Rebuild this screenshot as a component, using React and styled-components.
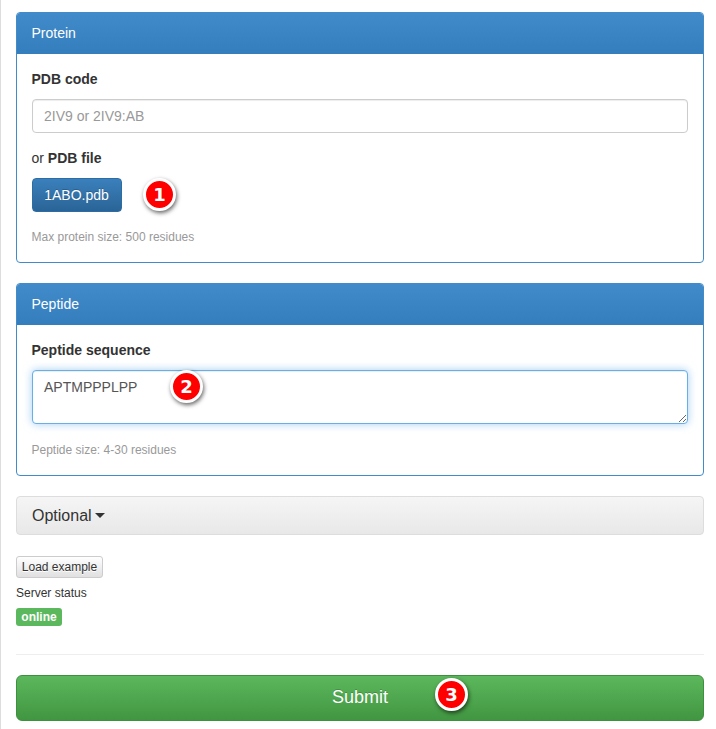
import styled, { createGlobalStyle } from "styled-components";

const GlobalStyle = createGlobalStyle`
  html, body {
    margin: 0;
    padding: 0;
    background: #fff;
  }
  * {
    box-sizing: border-box;
  }
`;

// Full page with the thin grey strip on the left edge
const Page = styled.div`
  position: relative;
  width: 716px;
  height: 729px;
  overflow: hidden;
  padding: 12px 12px 0 15px;
  border-left: 1px solid #ddd;
  font-family: "Liberation Sans", Arial, sans-serif;
  font-size: 14px;
  line-height: 20px;
  color: #333;
`;

const Panel = styled.section`
  border: 1px solid #428bca;
  border-radius: 4px;
  margin-bottom: 20px;
  background: #fff;
`;

const PanelHeading = styled.div`
  height: 41px;
  padding: 10px 14.5px;
  color: #fff;
  background: linear-gradient(to bottom, #428bca 0%, #357ebd 100%);
  border-bottom: 1px solid #357ebd;
  border-radius: 3px 3px 0 0;
`;

const PanelBody = styled.div`
  padding: 15px 15px 15px 14.5px;
`;

const Label = styled.div`
  margin-bottom: ${(p) => p.$gap}px;
`;

const TextInput = styled.input`
  display: block;
  width: 100%;
  height: 34px;
  padding: 6px 12px 6px 11.5px;
  margin-bottom: 15px;
  font: inherit;
  color: #555;
  border: 1px solid #ccc;
  border-radius: 4px;
  box-shadow: inset 0 1px 1px rgba(0, 0, 0, 0.075);
  outline: none;
  &::placeholder {
    color: #999;
    opacity: 1;
  }
`;

const TextArea = styled.textarea`
  display: block;
  width: 100%;
  height: 54px;
  padding: 6px 12px 6px 11.5px;
  margin: 0 0 16px;
  font: inherit;
  color: #555;
  border: 1px solid #66afe9;
  border-radius: 4px;
  box-shadow: inset 0 1px 1px rgba(0, 0, 0, 0.075), 0 0 8px rgba(102, 175, 233, 0.6);
  outline: none;
  resize: vertical;
`;

const FileButton = styled.button`
  display: block;
  width: 90px;
  height: 34px;
  padding: 6px 0;
  font: inherit;
  color: #fff;
  background: linear-gradient(to bottom, #3a80bc 0%, #2a6496 100%);
  border: 1px solid #2e6da4;
  border-radius: 4px;
  text-shadow: 0 -1px 0 rgba(0, 0, 0, 0.2);
  margin-bottom: 15px;
`;

const Help = styled.div`
  font-size: 12px;
  color: #999;
`;

const OptionalBar = styled.div`
  display: flex;
  align-items: center;
  gap: 3px;
  height: 39px;
  padding: 0 15px;
  margin-bottom: 21px;
  font-size: 16px;
  background: linear-gradient(to bottom, #f5f5f5 0%, #e8e8e8 100%);
  border: 1px solid #ddd;
  border-radius: 4px;
`;

const Caret = styled.span`
  width: 0;
  height: 0;
  border-top: 5px solid #333;
  border-left: 5px solid transparent;
  border-right: 5px solid transparent;
`;

const ExampleButton = styled.button`
  display: block;
  width: 87px;
  height: 22px;
  padding: 0;
  font: inherit;
  font-size: 12px;
  line-height: 18px;
  white-space: nowrap;
  color: #333;
  background: linear-gradient(to bottom, #fff 0%, #e0e0e0 100%);
  border: 1px solid #ccc;
  border-radius: 3px;
  text-shadow: 0 1px 0 #fff;
  margin-bottom: 5px;
`;

const StatusLine = styled.div`
  font-size: 12px;
  margin-bottom: 5px;
`;

const StatusBadge = styled.span`
  display: block;
  width: 46px;
  height: 18px;
  font-size: 12px;
  font-weight: bold;
  line-height: 18px;
  text-align: center;
  color: #fff;
  background: #5cb85c;
  border-radius: 3px;
`;

const Rule = styled.hr`
  margin: 28px 0 20px;
  border: 0;
  border-top: 1px solid #eee;
`;

const SubmitButton = styled.button`
  display: block;
  width: 100%;
  height: 46px;
  padding: 0 0 2px;
  font: inherit;
  font-size: 18px;
  color: #fff;
  background: linear-gradient(to bottom, #5cb85c 0%, #419641 100%);
  border: 1px solid #3e8f3e;
  border-radius: 6px;
  text-shadow: 0 -1px 0 rgba(0, 0, 0, 0.2);
`;

// Numbered callout laid over the form
const Callout = styled.span`
  position: absolute;
  left: ${(p) => p.$x - 17}px;
  top: ${(p) => p.$y - 16}px;
  display: flex;
  align-items: center;
  justify-content: center;
  width: 33px;
  height: 33px;
  font-family: "DejaVu Sans", sans-serif;
  font-size: 18px;
  font-weight: bold;
  color: #fff;
  background: #f00;
  border: 3px solid #fff;
  border-radius: 50%;
  box-shadow: 1px 2px 4px rgba(0, 0, 0, 0.6);
`;

export default function App() {
  return (
    <Page>
      <GlobalStyle />
      <Panel>
        <PanelHeading>Protein</PanelHeading>
        <PanelBody>
          <Label $gap={10}><b>PDB code</b></Label>
          <TextInput placeholder="2IV9 or 2IV9:AB" />
          <Label $gap={10}>or <b>PDB file</b></Label>
          <FileButton>1ABO.pdb</FileButton>
          <Help>Max protein size: 500 residues</Help>
        </PanelBody>
      </Panel>
      <Panel>
        <PanelHeading>Peptide</PanelHeading>
        <PanelBody>
          <Label $gap={10}><b>Peptide sequence</b></Label>
          <TextArea defaultValue="APTMPPPLPP" />
          <Help>Peptide size: 4-30 residues</Help>
        </PanelBody>
      </Panel>
      <OptionalBar>Optional <Caret /></OptionalBar>
      <ExampleButton>Load example</ExampleButton>
      <StatusLine>Server status</StatusLine>
      <StatusBadge>online</StatusBadge>
      <Rule />
      <SubmitButton>Submit</SubmitButton>
      <Callout $x={159} $y={194}>1</Callout>
      <Callout $x={186} $y={386}>2</Callout>
      <Callout $x={451} $y={694}>3</Callout>
    </Page>
  );
}
